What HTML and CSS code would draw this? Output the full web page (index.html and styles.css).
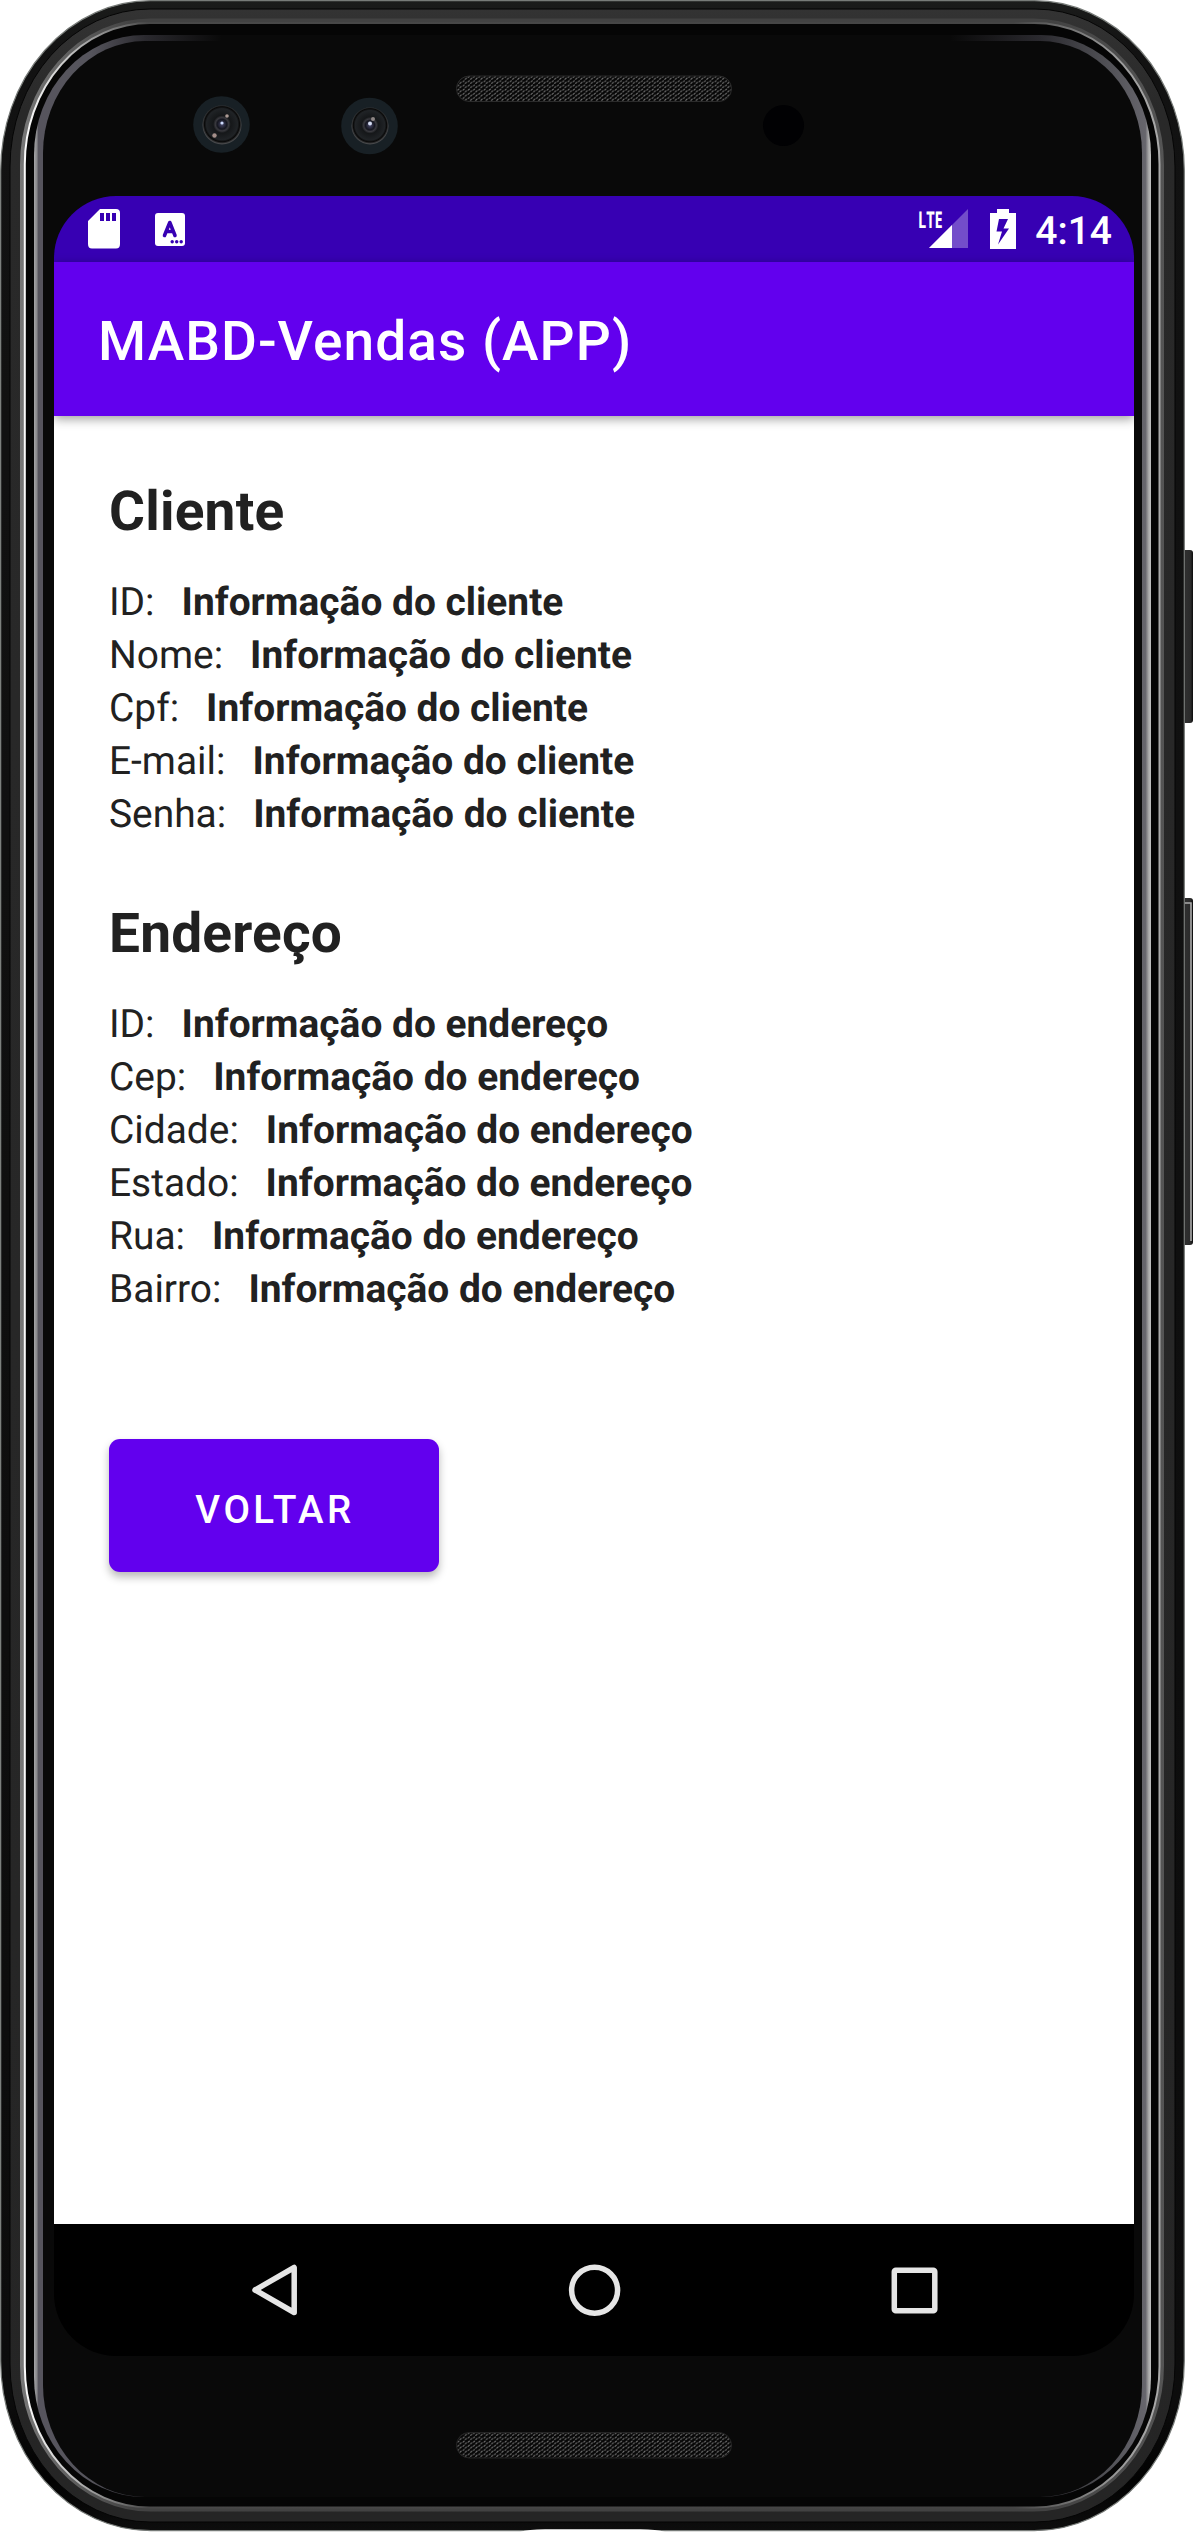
FILE: index.html
```html
<!DOCTYPE html>
<html lang="pt-BR">
<head>
<meta charset="utf-8">
<title>MABD-Vendas (APP)</title>
<link rel="stylesheet" href="styles.css">
</head>
<body>
<div class="device">
  <svg class="frame" viewBox="0 0 1194 2532" aria-hidden="true">
    <defs>
      <linearGradient id="edge" x1="0" y1="0" x2="0" y2="1">
        <stop offset="0" stop-color="#1b1c1b"/><stop offset=".02" stop-color="#121212"/><stop offset=".95" stop-color="#0c0c0c"/><stop offset=".98" stop-color="#020202"/><stop offset="1" stop-color="#0d0d0d"/>
      </linearGradient>
      <linearGradient id="band" x1="0" y1="0" x2="0" y2="1">
        <stop offset="0" stop-color="#333"/><stop offset=".04" stop-color="#292929"/><stop offset="1" stop-color="#252525"/>
      </linearGradient>
      <linearGradient id="shine" gradientUnits="userSpaceOnUse" x1="22" y1="0" x2="1162" y2="0">
        <stop offset="0" stop-color="#fff"/><stop offset=".035" stop-color="#ccc"/><stop offset=".11" stop-color="#484848"/><stop offset=".87" stop-color="#444"/><stop offset=".96" stop-color="#999"/><stop offset="1" stop-color="#aaa"/>
      </linearGradient>
      <linearGradient id="soft" gradientUnits="userSpaceOnUse" x1="20" y1="0" x2="1164" y2="0">
        <stop offset="0" stop-color="#777"/><stop offset=".1" stop-color="#424242"/><stop offset=".9" stop-color="#424242"/><stop offset="1" stop-color="#555"/>
      </linearGradient>
      <linearGradient id="glass" gradientUnits="userSpaceOnUse" x1="34" y1="0" x2="1151" y2="0">
        <stop offset="0" stop-color="#a5a5a7"/><stop offset=".0025" stop-color="#88888b"/><stop offset=".004" stop-color="#56545d"/><stop offset=".05" stop-color="#56555d"/><stop offset=".1" stop-color="#2a292e"/><stop offset=".168" stop-color="#090909"/><stop offset=".82" stop-color="#090909"/><stop offset=".9" stop-color="#2a292e"/><stop offset=".96" stop-color="#505055"/><stop offset=".995" stop-color="#66656c"/><stop offset=".998" stop-color="#aaa"/><stop offset="1" stop-color="#c0c0c0"/>
      </linearGradient>
      <linearGradient id="key" x1="0" y1="0" x2="1" y2="0">
        <stop offset="0" stop-color="#111"/><stop offset=".35" stop-color="#303030"/><stop offset=".8" stop-color="#2a2a2a"/><stop offset="1" stop-color="#090909"/>
      </linearGradient>
      <radialGradient id="lens" cx=".5" cy=".48" r=".5">
        <stop offset="0" stop-color="#49496a"/><stop offset=".25" stop-color="#15161f"/><stop offset=".34" stop-color="#39393e"/><stop offset=".45" stop-color="#151719"/><stop offset=".8" stop-color="#202326"/><stop offset=".9" stop-color="#090909"/><stop offset="1" stop-color="#48494b"/>
      </radialGradient>
      <pattern id="mesh" width="5.25" height="4.2" patternUnits="userSpaceOnUse">
        <rect width="5.25" height="4.2" fill="#070707"/>
        <path d="M.6 2.2 2.4 .6M3 4 4.8 2.200" stroke="#777" stroke-width="1.1"/>
      </pattern>
    </defs>
    <rect x="1182" y="550" width="11" height="173" rx="3" fill="url(#key)"/>
    <rect x="1182" y="898" width="11" height="347" rx="3" fill="url(#key)"/>
    <path d="M1184 903h7v338" fill="none" stroke="#aaa" stroke-width="1.6"/>
    <rect x=".7" y=".7" width="1183.6" height="2530" rx="150" ry="170" fill="url(#edge)" stroke="#777b78" stroke-width="1.2"/>
    <rect x="10" y="9" width="1165" height="2513" rx="140" ry="158" fill="url(#band)" stroke="#050505" stroke-width="1"/>
    <rect x="22.5" y="21" width="1139" height="2488" rx="128" ry="144" fill="none" stroke="url(#soft)" stroke-width="5"/>
    <rect x="24.8" y="23" width="1134.7" height="2484.5" rx="125" ry="141" fill="#050505" stroke="url(#shine)" stroke-width="2"/>
    <rect x="34" y="35" width="1117" height="2462" rx="110" ry="120" fill="url(#glass)"/>
    <rect x="43" y="41" width="1099" height="2456" rx="102" ry="112" fill="#090909"/>
    <path d="M520 2532Q528 2529.2 545 2529.2H640Q657 2529.2 665 2532Z" fill="#fff"/>
    <rect x="456.5" y="76" width="275" height="25.5" rx="12.7" fill="url(#mesh)" stroke="#2b2b2b"/>
    <rect x="456.5" y="2432.5" width="275" height="25.5" rx="12.7" fill="url(#mesh)" stroke="#252525"/>
    <circle cx="221.5" cy="124.5" r="28.3" fill="#182025"/>
    <circle cx="222" cy="125" r="19.5" fill="url(#lens)"/>
    <circle cx="222" cy="123" r="1.6" fill="#cfdcff"/>
    <circle cx="227" cy="116" r="1.8" fill="#ad9b95"/>
    <circle cx="214.5" cy="135.5" r="2.2" fill="#a58f8a"/>
    <circle cx="369.5" cy="126" r="28.3" fill="#182025"/>
    <circle cx="370" cy="126" r="18.5" fill="url(#lens)"/>
    <circle cx="370" cy="123.5" r="2" fill="#d5dcf2"/>
    <circle cx="373" cy="119" r="2" fill="#8d8584"/>
    <circle cx="783.5" cy="125.5" r="20.5" fill="#010103"/>
  </svg>

  <main class="screen">
    <div class="status">
      <svg class="sd" viewBox="0 0 32 40"><path fill="#fff" fill-rule="evenodd" d="M12 0H28Q32 0 32 4V35Q32 39.5 28 39.5H4Q0 39.5 0 35V12ZM12 4V12H16V4ZM18 4V12H22V4ZM24 4V12H28V4Z"/></svg>
      <svg class="ime" viewBox="0 0 30 33"><rect width="30" height="33" rx="3" fill="#fff"/><path d="M9.5 22.5 14.8 9.5 20 22.5M11.5 18.5H18" fill="none" stroke="#3700b3" stroke-width="3.6" stroke-linecap="round" stroke-linejoin="round"/><g fill="#3700b3"><circle cx="17.2" cy="28.7" r="1.7"/><circle cx="21.7" cy="28.7" r="1.7"/><circle cx="26.2" cy="28.7" r="1.7"/></g></svg>
      <div class="signal">
        <span class="lte">LTE</span>
        <svg class="bars" viewBox="0 0 39 39"><path d="M39 0V39H0Z" fill="#fff" opacity=".3"/><path d="M23 16V39H0Z" fill="#fff"/></svg>
      </div>
      <svg class="battery" viewBox="0 0 26 40"><path fill="#fff" fill-rule="evenodd" d="M7 0H19V4H26V40H0V4H7ZM9 10 6.5 22.5H12L8 35.5 19 19.5H13.5L18 10Z"/></svg>
      <span class="clock">4:14</span>
    </div>
    <header class="appbar">MABD-Vendas (APP)</header>
    <div class="content">
      <section class="group">
        <h2>Cliente</h2>
        <div class="row"><span>ID:</span><b>Informação do cliente</b></div>
        <div class="row"><span>Nome:</span><b>Informação do cliente</b></div>
        <div class="row"><span>Cpf:</span><b>Informação do cliente</b></div>
        <div class="row"><span>E-mail:</span><b>Informação do cliente</b></div>
        <div class="row"><span>Senha:</span><b>Informação do cliente</b></div>
      </section>
      <section class="group">
        <h2>Endereço</h2>
        <div class="row"><span>ID:</span><b>Informação do endereço</b></div>
        <div class="row"><span>Cep:</span><b>Informação do endereço</b></div>
        <div class="row"><span>Cidade:</span><b>Informação do endereço</b></div>
        <div class="row"><span>Estado:</span><b>Informação do endereço</b></div>
        <div class="row"><span>Rua:</span><b>Informação do endereço</b></div>
        <div class="row"><span>Bairro:</span><b>Informação do endereço</b></div>
      </section>
      <button class="back">VOLTAR</button>
    </div>
    <nav class="navbar">
      <svg viewBox="0 0 54 54"><path d="M47.2 4.5V49.5L8 27Z"/></svg>
      <svg viewBox="0 0 54 54"><circle cx="27.6" cy="27.3" r="23"/></svg>
      <svg viewBox="0 0 54 54"><rect x="7.3" y="7.3" width="40.5" height="40.5" rx="1.5"/></svg>
    </nav>
  </main>
</div>
</body>
</html>
```
FILE: styles.css
```css
* { box-sizing: border-box; }

body {
  margin: 0;
  background: #fff;
  font-family: Roboto, sans-serif;
  text-rendering: geometricPrecision;
}

.device {
  display: grid;
  width: 1194px;
  height: 2532px;
  overflow: hidden;
}

.frame,
.screen { grid-area: 1 / 1; }

.frame {
  width: 1194px;
  height: 2532px;
}

.screen {
  display: flex;
  flex-direction: column;
  width: 1080px;
  height: 2160px;
  margin: 196px 0 0 54px;
  border-radius: 62px;
  overflow: hidden;
  color: #212121;
  z-index: 1;
}

.status {
  display: flex;
  align-items: flex-start;
  height: 66px;
  flex: none;
  padding: 13px 22px 0 34px;
  background: #3700b3;
  color: #fff;
}

.sd { width: 32px; height: 40px; }
.ime { width: 30px; height: 33px; margin: 4px 0 0 35px; }

.signal {
  display: flex;
  width: 50px;
  margin-left: auto;
}

.lte {
  width: 11px;
  font: 700 23px/20px "Open Sans", sans-serif;
  transform: scaleX(.63);
  transform-origin: 0 0;
}

.bars { width: 39px; height: 39px; flex: none; }
.battery { width: 26px; height: 40px; margin-left: 22px; }

.clock {
  margin-left: 19px;
  font-size: 39px;
  font-weight: 500;
  line-height: 44px;
}

.appbar {
  position: relative;
  height: 154px;
  flex: none;
  padding-left: 44px;
  background: #6200ee;
  color: #fff;
  font-size: 55px;
  font-weight: 500;
  line-height: 161px;
  letter-spacing: 1.05px;
  box-shadow: 0 3px 10px rgba(0, 0, 0, .38);
}

.content {
  display: flex;
  flex-direction: column;
  flex: 1;
  padding: 57px 55px 0;
  background: #fff;
}

.group { margin-bottom: 54px; }

h2 {
  margin: 0 0 25px;
  font-size: 55px;
  font-weight: 700;
  line-height: 78px;
  letter-spacing: .2px;
}

.row {
  display: flex;
  gap: 27px;
  font-size: 38.9px;
  line-height: 53px;
}

.back {
  align-self: flex-start;
  width: 330px;
  height: 133px;
  margin-top: 69px;
  border: 0;
  border-radius: 11px;
  background: #6200ee;
  color: #fff;
  font: 500 38.5px/138px Roboto, sans-serif;
  letter-spacing: 3.43px;
  padding: 2px 0 0 2px;
  box-shadow: 0 5px 8px rgba(0, 0, 0, .28);
}

.navbar {
  display: flex;
  justify-content: space-between;
  align-items: center;
  height: 132px;
  flex: none;
  padding: 0 193px;
  background: #000;
}

.navbar svg {
  width: 54px;
  height: 54px;
  fill: none;
  stroke: #e6e6e6;
  stroke-width: 5.5;
  stroke-linejoin: round;
}
```
